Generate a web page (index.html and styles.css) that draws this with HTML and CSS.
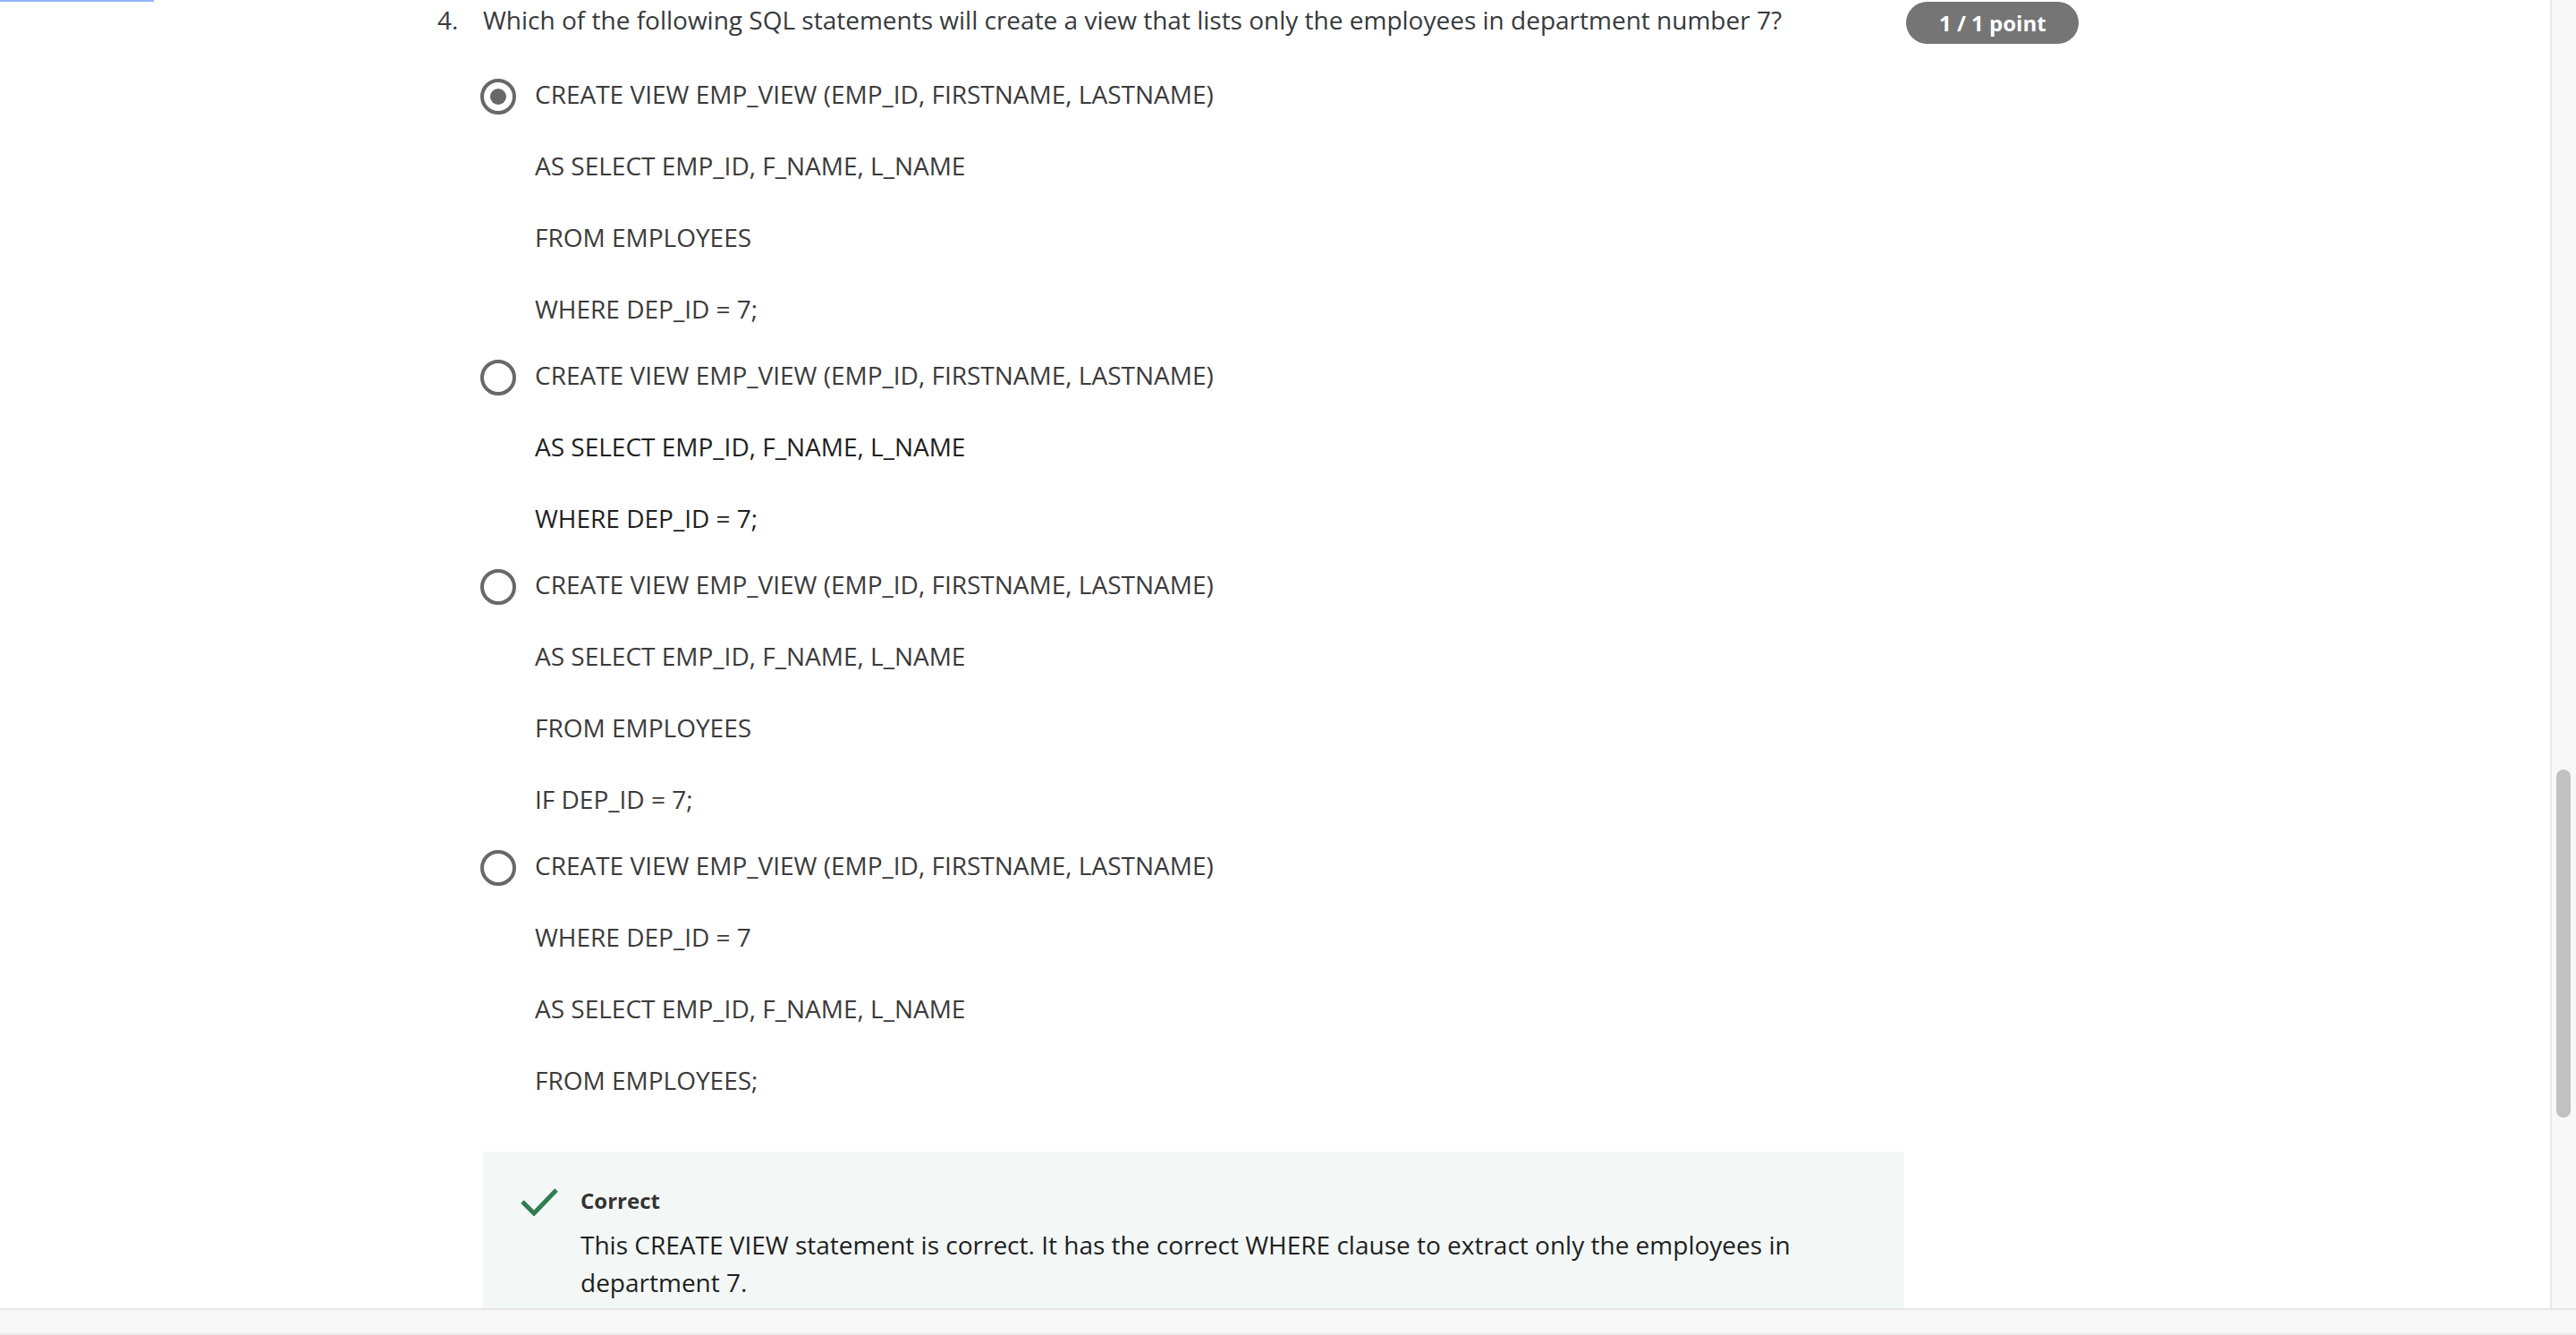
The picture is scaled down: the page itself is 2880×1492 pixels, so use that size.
FILE: index.html
```html
<!DOCTYPE html>
<html lang="en">
<head>
<meta charset="utf-8">
<title>Quiz question 4</title>
<link rel="stylesheet" href="styles.css">
</head>
<body>
<div class="window">
  <div class="main">
    <div class="viewport">
      <div class="focus-remnant"></div>
      <div class="question">
        <div class="q-number">4.</div>
        <div class="q-body">
          <div class="q-prompt">Which of the following SQL statements will create a view that lists only the employees in department number 7?</div>
          <div class="options">
            <div class="option">
              <span class="radio radio-checked"><span class="radio-dot"></span></span>
              <div class="option-lines">
                <p>CREATE VIEW EMP_VIEW (EMP_ID, FIRSTNAME, LASTNAME)</p>
                <p>AS SELECT EMP_ID, F_NAME, L_NAME</p>
                <p>FROM EMPLOYEES</p>
                <p>WHERE DEP_ID = 7;</p>
              </div>
            </div>
            <div class="option">
              <span class="radio"></span>
              <div class="option-lines">
                <p>CREATE VIEW EMP_VIEW (EMP_ID, FIRSTNAME, LASTNAME)</p>
                <p class="dark">AS SELECT EMP_ID, F_NAME, L_NAME</p>
                <p class="dark">WHERE DEP_ID = 7;</p>
              </div>
            </div>
            <div class="option">
              <span class="radio"></span>
              <div class="option-lines">
                <p>CREATE VIEW EMP_VIEW (EMP_ID, FIRSTNAME, LASTNAME)</p>
                <p>AS SELECT EMP_ID, F_NAME, L_NAME</p>
                <p>FROM EMPLOYEES</p>
                <p>IF DEP_ID = 7;</p>
              </div>
            </div>
            <div class="option">
              <span class="radio"></span>
              <div class="option-lines">
                <p>CREATE VIEW EMP_VIEW (EMP_ID, FIRSTNAME, LASTNAME)</p>
                <p>WHERE DEP_ID = 7</p>
                <p>AS SELECT EMP_ID, F_NAME, L_NAME</p>
                <p>FROM EMPLOYEES;</p>
              </div>
            </div>
          </div>
          <div class="feedback">
            <svg class="check" width="42" height="32" viewBox="0 0 42 32" aria-hidden="true">
              <polyline points="2,16 15,29 40,3" fill="none" stroke="#2f7d52" stroke-width="5" stroke-linejoin="miter" stroke-linecap="butt"/>
            </svg>
            <div class="feedback-text">
              <div class="feedback-title">Correct</div>
              <div class="feedback-body">This CREATE VIEW statement is correct. It has the correct WHERE clause to extract only the employees in department 7.</div>
            </div>
          </div>
        </div>
        <div class="q-score"><span class="badge">1 / 1 point</span></div>
      </div>
    </div>
    <div class="vscroll"><div class="thumb"></div></div>
  </div>
  <div class="hscroll"></div>
</div>
</body>
</html>
```

FILE: styles.css
```css
html, body {
  margin: 0;
  padding: 0;
  background: #ffffff;
}

body {
  font-family: "Open Sans", "Noto Sans", sans-serif;
  color: #373a3c;
  overflow: hidden;
}

.window {
  width: 2880px;
  height: 1492px;
  display: flex;
  flex-direction: column;
}

.main {
  flex: 1;
  display: flex;
  min-height: 0;
}

.viewport {
  flex: 1;
  position: relative;
  overflow: hidden;
  background: #ffffff;
}

.focus-remnant {
  position: absolute;
  top: 0;
  left: 0;
  width: 172px;
  height: 2px;
  background: #93b3f4;
}

.question {
  display: flex;
  align-items: flex-start;
  padding: 1px 0 0 489px;
}

.q-number {
  width: 51px;
  font-size: 28px;
  line-height: 42px;
}

.q-body {
  width: 1589px;
}

.q-prompt {
  font-size: 28px;
  line-height: 42px;
}

.q-score {
  margin-left: 2px;
  padding-top: 1px;
}

.badge {
  display: inline-block;
  height: 47px;
  line-height: 47px;
  padding: 0 36px 0 37px;
  border-radius: 24px;
  background: #757575;
  color: #ffffff;
  font-size: 24px;
  font-weight: 700;
  white-space: nowrap;
}

.options {
  display: flex;
  flex-direction: column;
  gap: 32px;
  margin-top: 41px;
}

.option {
  display: flex;
  align-items: flex-start;
  margin-left: -3px;
}

.radio {
  box-sizing: border-box;
  flex: none;
  width: 40px;
  height: 40px;
  margin-top: 4px;
  margin-right: 21px;
  border: 4px solid #686868;
  border-radius: 50%;
  display: flex;
  align-items: center;
  justify-content: center;
}

.radio-dot {
  width: 18px;
  height: 18px;
  border-radius: 50%;
  background: #686868;
}

.option-lines p {
  margin: 0 0 38px;
  font-size: 28px;
  line-height: 42px;
  color: #3b3b3b;
}

.option-lines p:last-child {
  margin-bottom: 0;
}

.option-lines p.dark {
  color: #1f1f1f;
}

.feedback {
  margin-top: 59px;
  background: #f3f8f6;
  padding: 37px 40px 40px 42px;
  display: flex;
  align-items: flex-start;
}

.check {
  flex: none;
  margin-top: 3px;
  margin-right: 25px;
}

.feedback-text {
  flex: 1;
}

.feedback-title {
  font-size: 24px;
  font-weight: 700;
  line-height: 36px;
  color: #333333;
}

.feedback-body {
  margin-top: 10px;
  font-size: 28px;
  line-height: 42px;
  color: #1f1f1f;
}

.vscroll {
  box-sizing: border-box;
  width: 29px;
  flex: none;
  background: #f8f8f8;
  border-left: 2px solid #e8e8e8;
  padding: 860px 0 0 5px;
}

.thumb {
  width: 16px;
  height: 389px;
  border-radius: 8px;
  background: #c1c1c1;
}

.hscroll {
  box-sizing: border-box;
  flex: none;
  height: 30px;
  background: #f8f8f8;
  border-top: 2px solid #e6e6e6;
  border-bottom: 2px solid #ececec;
}
```
